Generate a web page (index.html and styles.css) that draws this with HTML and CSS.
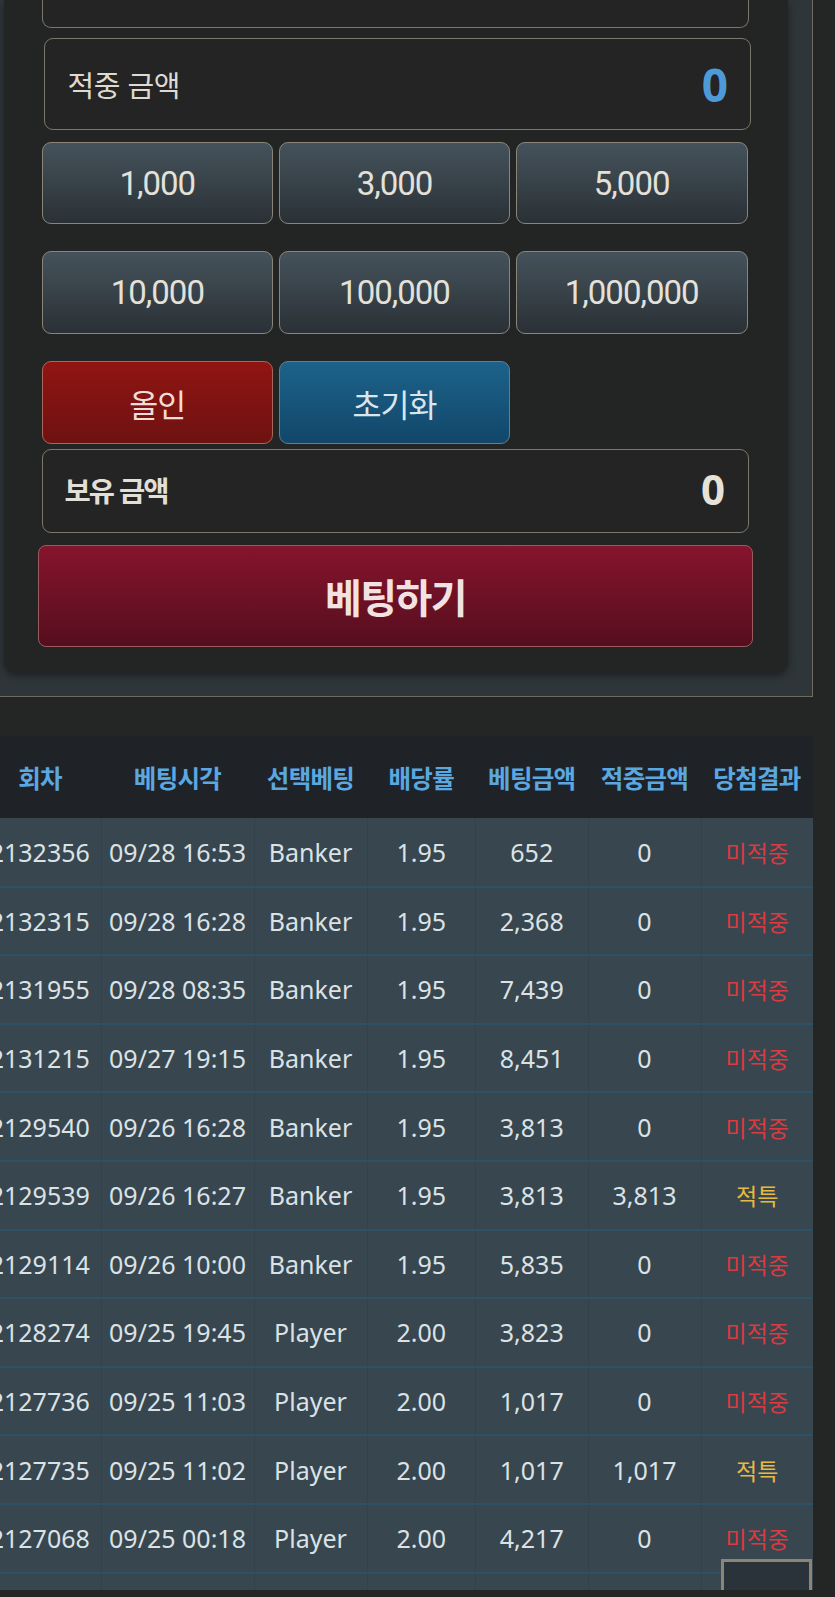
FILE: index.html
```html
<!DOCTYPE html>
<html lang="ko">
<head>
<meta charset="utf-8">
<title>베팅</title>
<link rel="stylesheet" href="styles.css">
</head>
<body>
<div class="panel">
  <div class="card">
    <div class="field field-cut"></div>
    <div class="field field-win">
      <span class="label">적중 금액</span>
      <span class="value value-blue">0</span>
    </div>
    <div class="chips chips-first">
      <button class="chip">1,000</button>
      <button class="chip">3,000</button>
      <button class="chip">5,000</button>
    </div>
    <div class="chips">
      <button class="chip">10,000</button>
      <button class="chip">100,000</button>
      <button class="chip">1,000,000</button>
    </div>
    <div class="chips">
      <button class="act act-allin">올인</button>
      <button class="act act-reset">초기화</button>
    </div>
    <div class="field field-hold">
      <span class="label label-bold">보유 금액</span>
      <span class="value value-white">0</span>
    </div>
    <button class="bet">베팅하기</button>
  </div>
</div>

<div class="history">
  <table class="tbl">
    <colgroup>
      <col class="c1"><col class="c2"><col class="c3"><col class="c4"><col class="c5"><col class="c6"><col class="c7">
    </colgroup>
    <thead>
      <tr><th>회차</th><th>베팅시각</th><th>선택베팅</th><th>배당률</th><th>베팅금액</th><th>적중금액</th><th>당첨결과</th></tr>
    </thead>
    <tbody>
      <tr><td>2132356</td><td>09/28 16:53</td><td>Banker</td><td>1.95</td><td>652</td><td>0</td><td class="lose">미적중</td></tr>
      <tr><td>2132315</td><td>09/28 16:28</td><td>Banker</td><td>1.95</td><td>2,368</td><td>0</td><td class="lose">미적중</td></tr>
      <tr><td>2131955</td><td>09/28 08:35</td><td>Banker</td><td>1.95</td><td>7,439</td><td>0</td><td class="lose">미적중</td></tr>
      <tr><td>2131215</td><td>09/27 19:15</td><td>Banker</td><td>1.95</td><td>8,451</td><td>0</td><td class="lose">미적중</td></tr>
      <tr><td>2129540</td><td>09/26 16:28</td><td>Banker</td><td>1.95</td><td>3,813</td><td>0</td><td class="lose">미적중</td></tr>
      <tr><td>2129539</td><td>09/26 16:27</td><td>Banker</td><td>1.95</td><td>3,813</td><td>3,813</td><td class="tie">적특</td></tr>
      <tr><td>2129114</td><td>09/26 10:00</td><td>Banker</td><td>1.95</td><td>5,835</td><td>0</td><td class="lose">미적중</td></tr>
      <tr><td>2128274</td><td>09/25 19:45</td><td>Player</td><td>2.00</td><td>3,823</td><td>0</td><td class="lose">미적중</td></tr>
      <tr><td>2127736</td><td>09/25 11:03</td><td>Player</td><td>2.00</td><td>1,017</td><td>0</td><td class="lose">미적중</td></tr>
      <tr><td>2127735</td><td>09/25 11:02</td><td>Player</td><td>2.00</td><td>1,017</td><td>1,017</td><td class="tie">적특</td></tr>
      <tr><td>2127068</td><td>09/25 00:18</td><td>Player</td><td>2.00</td><td>4,217</td><td>0</td><td class="lose">미적중</td></tr>
      <tr><td>2126890</td><td>09/24 21:40</td><td>Player</td><td>2.00</td><td>2,500</td><td>0</td><td class="lose">미적중</td></tr>
    </tbody>
  </table>
  <button class="to-top" aria-label="맨 위로">
    <svg width="22" height="14" viewBox="0 0 22 14"><path d="M2 12 L11 3 L20 12" fill="none" stroke="#e8e8e8" stroke-width="3" stroke-linecap="round" stroke-linejoin="round"/></svg>
  </button>
</div>
</body>
</html>
```

FILE: styles.css
```css
* { box-sizing: border-box; }

html, body {
  margin: 0;
  padding: 0;
  background: #232625;
  font-family: "Noto Sans", "Noto Sans CJK KR", sans-serif;
  color: #e2dfd8;
  overflow: hidden;
}

button {
  font-family: inherit;
  cursor: pointer;
  margin: 0;
  padding: 0;
}

/* ---------- betting panel ---------- */
.panel {
  width: 813px;
  background: #2f3639;
  border-right: 1.5px solid #6e6b62;
  border-bottom: 1.5px solid #6e6b62;
  padding: 0 24px 24px 4px;
}

.card {
  display: flex;
  flex-direction: column;
  background: #222524;
  border-radius: 0 0 11px 11px;
  box-shadow: 0 3px 8px rgba(0, 0, 0, 0.45);
  padding: 0 39px 25px 37.5px;
}

.field {
  display: flex;
  align-items: center;
  justify-content: space-between;
  background: #232423;
  border: 1.5px solid #7a776d;
  border-radius: 9px;
}

.field-cut {
  height: 28px;
  border-top: none;
  border-radius: 0 0 9px 9px;
}

.field-win {
  margin: 10px -2px 0 2px;
  height: 92px;
  padding: 0 22px 0 23px;
}

.field-hold {
  margin-top: 5px;
  height: 84px;
  padding: 0 23px 4px 22px;
}

.label {
  font-family: "Noto Sans CJK KR", sans-serif;
  font-size: 29px;
  letter-spacing: -0.5px;
  color: #dedad1;
}

.label-bold {
  font-weight: 700;
  font-size: 28.5px;
  letter-spacing: -2px;
  color: #e2dfd7;
}

.value {
  font-family: "Noto Sans", sans-serif;
  font-weight: 700;
  line-height: 1;
}

.value-blue {
  font-size: 46px;
  color: #4e9ad8;
}

.value-white {
  font-size: 42px;
  color: #e6e2d8;
}

.chips {
  display: grid;
  grid-template-columns: repeat(3, 1fr);
  column-gap: 5.5px;
  margin: 27px 1.5px 0 0;
  height: 83px;
}

.chips-first {
  margin-top: 12px;
  height: 82px;
}

.chip {
  background: linear-gradient(180deg, #45525b 0%, #2a3136 100%);
  border: 1.5px solid #8a8579;
  border-radius: 9px;
  color: #e3e1da;
  font-family: Roboto, sans-serif;
  font-size: 33px;
  letter-spacing: -1px;
}

.act {
  border-radius: 9px;
  font-family: "Noto Sans CJK KR", sans-serif;
  font-size: 31.5px;
  letter-spacing: -1px;
}

.act-allin {
  background: linear-gradient(180deg, #901512 0%, #6e1211 100%);
  border: 1.5px solid #a9675c;
  color: #f1dcd7;
}

.act-reset {
  background: linear-gradient(180deg, #1d628b 0%, #114769 100%);
  border: 1.5px solid #5f8094;
  color: #dbe6ec;
}

.bet {
  margin: 12px -4px 0 -3.5px;
  height: 102px;
  background: linear-gradient(180deg, #86142d 0%, #550e1e 100%);
  border: 1.5px solid #9b5a5f;
  border-radius: 8px;
  color: #f2e2e2;
  font-family: "Noto Sans CJK KR", sans-serif;
  font-weight: 700;
  font-size: 40px;
  letter-spacing: -1.5px;
}

/* ---------- history table ---------- */
.history {
  position: relative;
  width: 813px;
  height: 854px;
  margin-top: 39px;
  overflow: hidden;
}

.tbl {
  table-layout: fixed;
  border-collapse: collapse;
  width: 834px;
  margin-left: -21px;
}

.c1 { width: 122px; }
.c2 { width: 153px; }
.c3 { width: 113px; }
.c4 { width: 108.5px; }
.c5 { width: 112.5px; }
.c6 { width: 113px; }
.c7 { width: 112px; }

.tbl th {
  height: 82px;
  background: #1f2327;
  color: #5ba8e1;
  font-family: "Noto Sans CJK KR", sans-serif;
  font-weight: 700;
  font-size: 24.5px;
  letter-spacing: -0.7px;
  text-align: center;
  padding: 0;
  white-space: nowrap;
}

.tbl td {
  height: 68.6px;
  background: #38464f;
  border-bottom: 2px solid #2d5266;
  border-right: 1px solid #33414a;
  color: #dbe2e6;
  font-size: 25px;
  text-align: center;
  padding: 0;
  white-space: nowrap;
}

.tbl td:last-child { border-right: none; }

.tbl td.lose {
  color: #dc3a40;
  font-family: "Noto Sans CJK KR", sans-serif;
  font-size: 23px;
}

.tbl td.tie {
  color: #e8b942;
  font-family: "Noto Sans CJK KR", sans-serif;
  font-size: 23px;
}

.to-top {
  position: absolute;
  top: 823px;
  right: 1px;
  width: 91px;
  height: 66px;
  background: #2a3339;
  border: 3px solid #8c8477;
  display: flex;
  align-items: flex-start;
  justify-content: center;
  padding-top: 27px;
}
```
